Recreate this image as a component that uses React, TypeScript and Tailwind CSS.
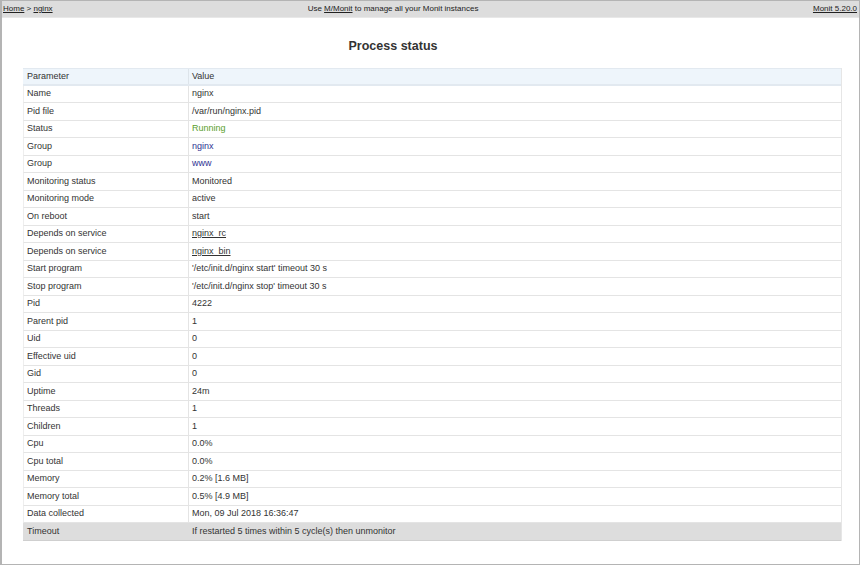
import React from 'react';

type Row = { k: string; v: string; kind?: 'green' | 'blue' | 'link' };

const rows: Row[] = [
  { k: 'Name', v: 'nginx' },
  { k: 'Pid file', v: '/var/run/nginx.pid' },
  { k: 'Status', v: 'Running', kind: 'green' },
  { k: 'Group', v: 'nginx', kind: 'blue' },
  { k: 'Group', v: 'www', kind: 'blue' },
  { k: 'Monitoring status', v: 'Monitored' },
  { k: 'Monitoring mode', v: 'active' },
  { k: 'On reboot', v: 'start' },
  { k: 'Depends on service', v: 'nginx_rc', kind: 'link' },
  { k: 'Depends on service', v: 'nginx_bin', kind: 'link' },
  { k: 'Start program', v: "'/etc/init.d/nginx start' timeout 30 s" },
  { k: 'Stop program', v: "'/etc/init.d/nginx stop' timeout 30 s" },
  { k: 'Pid', v: '4222' },
  { k: 'Parent pid', v: '1' },
  { k: 'Uid', v: '0' },
  { k: 'Effective uid', v: '0' },
  { k: 'Gid', v: '0' },
  { k: 'Uptime', v: '24m' },
  { k: 'Threads', v: '1' },
  { k: 'Children', v: '1' },
  { k: 'Cpu', v: '0.0%' },
  { k: 'Cpu total', v: '0.0%' },
  { k: 'Memory', v: '0.2% [1.6 MB]' },
  { k: 'Memory total', v: '0.5% [4.9 MB]' },
  { k: 'Data collected', v: 'Mon, 09 Jul 2018 16:36:47' },
];

function valueClass(kind?: Row['kind']) {
  if (kind === 'green') return 'text-[#5aa02c]';
  if (kind === 'blue') return 'text-[#2e3192]';
  if (kind === 'link') return 'underline text-[#333]';
  return 'text-[#333]';
}

export default function App() {
  return (
    <div
      className="w-[861px] h-[566px] bg-white"
      style={{ fontFamily: '"Liberation Sans", Arial, sans-serif' }}
    >
      <div className="w-[860px] h-[565px] border-l-2 border-r border-b border-t border-[#b4b4b4] flex flex-col">
        {/* top bar */}
        <div className="h-[17px] bg-[#dddddd] border-b border-[#e8e8e8] flex items-center text-[8px] text-[#222] px-[1px]">
          <div className="w-[200px]">
            <span className="underline">Home</span> &gt; <span className="underline">nginx</span>
          </div>
          <div className="flex-1 text-center pr-[75px]">
            Use <span className="underline">M/Monit</span> to manage all your Monit instances
          </div>
          <div className="w-[200px] text-right pr-[1px]">
            <span className="underline">Monit 5.20.0</span>
          </div>
        </div>

        <div className="pt-[20px] text-center pr-[75px] text-[12.5px] font-bold text-[#333] leading-[16px]">
          Process status
        </div>

        <div className="pl-[21px] pt-[14px]">
          <div className="w-[819px] text-[9px] text-[#333] border-r border-[#e6e6e6]">
            <div className="flex h-[17.5px] items-center bg-[#eef5fb] border-b-2 border-t border-[#e2e9f0]">
              <div className="w-[166px] pl-[4px] border-r border-[#dde4ea] h-full flex items-center">Parameter</div>
              <div className="pl-[3px]">Value</div>
            </div>
            {rows.map((r, i) => (
              <div key={i} className="flex h-[17.5px] items-center border-b border-[#e4e4e4] border-l border-l-[#eeeeee]">
                <div className="w-[165px] pl-[3px] border-r border-[#e4e4e4] h-full flex items-center">{r.k}</div>
                <div className={'pl-[3px] ' + valueClass(r.kind)}>{r.v}</div>
              </div>
            ))}
            <div className="flex h-[17.5px] items-center bg-[#dddddd] border-b border-[#cfcfcf]">
              <div className="w-[166px] pl-[4px]">Timeout</div>
              <div className="pl-[3px]">If restarted 5 times within 5 cycle(s) then unmonitor</div>
            </div>
          </div>
        </div>
      </div>
    </div>
  );
}
